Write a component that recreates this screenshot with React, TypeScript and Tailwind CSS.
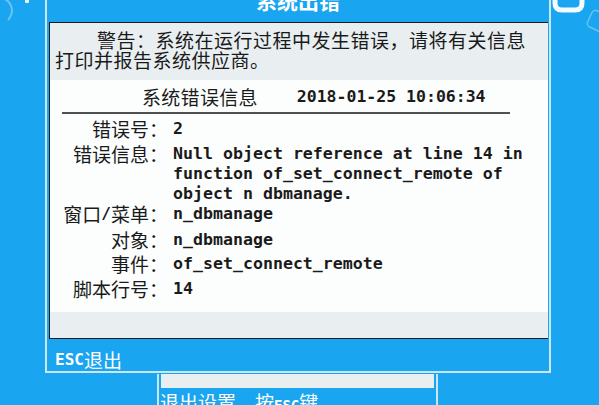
const cjk = "font-['Noto_Sans_CJK_SC','Noto_Sans',sans-serif]";
const mono = "font-['DejaVu_Sans_Mono','Liberation_Mono',monospace] font-bold";

type Row = { label: React.ReactNode; lines: string[]; gap: string };

const rows: Row[] = [
  { label: '错误号：', lines: ['2'], gap: 'mt-0' },
  {
    label: '错误信息：',
    lines: ['Null object reference at line 14 in', 'function of_set_connect_remote of', 'object n dbmanage.'],
    gap: 'mt-[5px]',
  },
  {
    label: (
      <>
        窗口<span className={`${mono} text-[16px] leading-none`}>/</span>菜单：
      </>
    ),
    lines: ['n_dbmanage'],
    gap: 'mt-0',
  },
  { label: '对象：', lines: ['n_dbmanage'], gap: 'mt-[6px]' },
  { label: '事件：', lines: ['of_set_connect_remote'], gap: 'mt-[4px]' },
  { label: '脚本行号：', lines: ['14'], gap: 'mt-[5px]' },
];

function Decorations() {
  return (
    <>
      {/* desktop icons peeking out behind the dialog */}
      <svg className="absolute left-0 top-0" width="40" height="30" viewBox="0 0 40 30">
        <path d="M-4 -2 A13 13 0 0 1 8 20" fill="none" stroke="#8fd0f6" strokeWidth="2" opacity="0.7" />
        <rect x="25" y="-4" width="4" height="7" rx="1" fill="#eaf6fd" />
      </svg>
      <svg className="absolute right-0 top-0" width="50" height="40" viewBox="0 0 50 40">
        <path d="M6 -6 V3 Q6 10 13 10 H26 Q33 10 33 3 V-6" fill="none" stroke="#f4fbff" strokeWidth="5" />
        <rect x="40" y="12" width="18" height="18" rx="4" transform="rotate(25 49 21)" fill="none" stroke="#7cc8f4" strokeWidth="1.5" opacity="0.8" />
      </svg>
    </>
  );
}

export default function App() {
  return (
    <div className={`relative w-[599px] h-[405px] overflow-hidden bg-[#1aa5f1] ${cjk}`}>
      <Decorations />

      {/* error dialog */}
      <div className="relative ml-[45px] mt-[-12px] w-[506px] border-2 border-t-0 border-[#cbe7f7] bg-[#1aa5f1]">
        <div className="h-[34px] pt-[1px] text-center text-[21px] leading-[22px] font-bold text-white">系统出错</div>

        <div className="ml-[2px] mr-[1px] border border-r-0 border-[#1c1c1c] text-[#1a1a1a]">
          <div className="h-[57px] bg-[#e9eef1] pt-[7px] pl-[5px] text-[19px] leading-[20px] tracking-[0.5px]">
            <div className="h-[20px] pl-[42px]">警告：系统在运行过程中发生错误，请将有关信息</div>
            <div className="h-[20px]">打印并报告系统供应商。</div>
          </div>

          <div className="h-[232px] bg-[#fcfdfd] pt-[7px]">
            <div className="flex items-center h-[20px] pl-[92px]">
              <span className="text-[19px] leading-[20px] tracking-[0.3px]">系统错误信息</span>
              <span className={`${mono} ml-[39px] text-[16.5px] leading-[20px]`}>2018-01-25 10:06:34</span>
            </div>
            <div className="ml-[12px] mt-[5px] w-[448px] h-[2px] bg-[#505050]" />

            <div className="mt-[5px] flex flex-col">
              {rows.map((r, i) => (
                <div key={i} className={`flex ${r.gap}`}>
                  <div className="w-[118px] h-[20px] shrink-0 flex items-center justify-end whitespace-pre text-[19px] leading-[20px]">
                    {r.label}
                  </div>
                  <div className={`${mono} ml-[5px] text-[16.6px] leading-[20px] whitespace-pre`}>
                    {r.lines.map((l) => (
                      <div key={l} className="h-[20px]">
                        {l}
                      </div>
                    ))}
                  </div>
                </div>
              ))}
            </div>
          </div>

          <div className="h-[26px] bg-[#e9eef1]" />
        </div>

        <div className="h-[32px] pl-[8px] pt-[10px] flex items-center text-white">
          <span className={`${mono} text-[16px] leading-[20px]`}>ESC</span>
          <span className="text-[19px] leading-[20px]">退出</span>
        </div>
      </div>

      {/* settings panel underneath */}
      <div className="ml-[157px] mt-[1px] w-[281px] border-x-2 border-[#cbe7f7] bg-[#1aa5f1]">
        <div className="h-[14px] mx-[2px] bg-[#e9eef1]" />
        <div className="pl-[1px] pt-[4px] text-[19px] leading-[20px] text-white">
          退出设置，按<span className={`${mono} text-[14px] leading-none`}>ESC</span>键
        </div>
      </div>
    </div>
  );
}
